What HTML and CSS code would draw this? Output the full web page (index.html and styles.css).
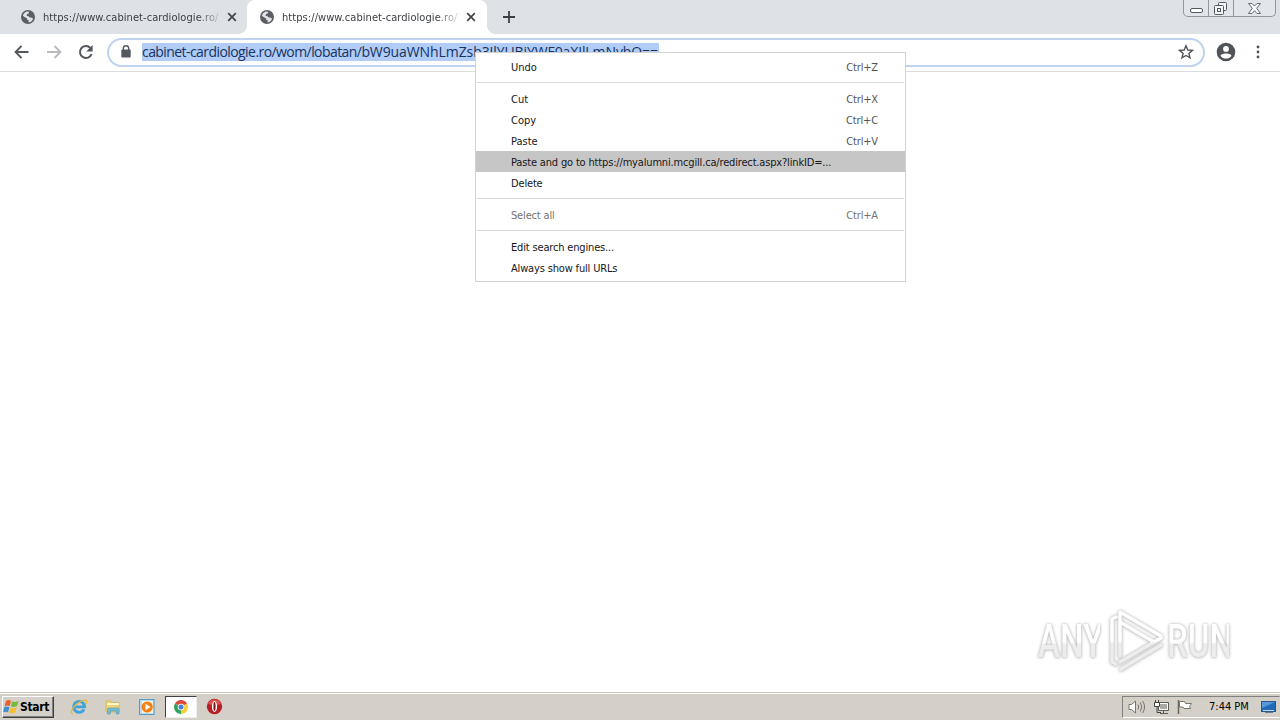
FILE: index.html
```html
<!DOCTYPE html>
<html lang="en">
<head>
<meta charset="utf-8">
<title>Browser</title>
<link rel="stylesheet" href="styles.css">
</head>
<body>
<svg class="defs" width="0" height="0">
  <symbol id="globe" viewBox="0 0 14 14"><circle cx="7" cy="7" r="7" fill="#5b5e62"/><path d="M3 3.2 5.6 1.6 8.2 1.8 7.6 3.4 6 4.2 5.6 5.8 7.6 6.2 8.6 7.6 10 7.4 11.6 8 12 9.2 10 11.8 7.6 12.4 7.8 10.6 6.2 9.8 6 8.2 4.2 7.4 1.8 5.8Z" fill="#dfe2e6"/></symbol>
  <symbol id="close" viewBox="0 0 10 10"><path d="M1.2 1.2 8.8 8.8M8.8 1.2 1.2 8.8" stroke="#404347" stroke-width="1.7" fill="none"/></symbol>
</svg>
<div class="screen">
  <header class="tabs">
    <div class="tab"><svg class="globe"><use href="#globe"/></svg><span class="tab-title">https://www.cabinet-cardiologie.ro/</span><svg class="close"><use href="#close"/></svg></div>
    <div class="tab active"><svg class="globe"><use href="#globe"/></svg><span class="tab-title">https://www.cabinet-cardiologie.ro/</span><svg class="close"><use href="#close"/></svg></div>
    <svg class="plus" width="12" height="12" viewBox="0 0 12 12"><path d="M6 0V12M0 6H12" stroke="#3d4043" stroke-width="1.8"/></svg>
    <div class="window-buttons">
      <span class="wb wb-min"><svg width="13" height="6"><rect x=".5" y=".5" width="12" height="4" rx="1.5" fill="#fff" stroke="#55585f"/></svg></span>
      <span class="wb wb-max"><svg width="14" height="14" fill="#f4f5f7" stroke="#55585f"><rect x="4.5" y=".5" width="8" height="8" rx="1"/><rect x=".5" y="3.5" width="9" height="9" rx="1"/><rect x="3.5" y="6.5" width="3" height="3"/></svg></span>
      <span class="wb wb-close"><svg width="13" height="11"><path d="M.5.5H4L6.5 3 9 .5h3.500L8.700 5.300 12.500 10.500H9L6.500 7.700 4 10.500H.5L4.300 5.300Z" fill="#f8f8fa" stroke="#666970"/></svg></span>
    </div>
  </header>
  <nav class="toolbar">
    <svg class="back" width="16" height="14" viewBox="0 0 16 14"><path d="M14.500 7H1.500M7.500 1 1.500 7l6 6" fill="none" stroke="#55585b" stroke-width="1.800"/></svg>
    <svg class="forward" width="16" height="14" viewBox="0 0 16 14"><path d="M1 7h13.500M8.500 1l6 6-6 6" fill="none" stroke="#b8babd" stroke-width="1.800"/></svg>
    <svg class="reload" width="16" height="16" viewBox="0 0 16 16"><path d="M13.600 10A6 6 0 1 1 12.300 3.800" fill="none" stroke="#53565a" stroke-width="2"/><path d="M14.600 1v6.500H8.300Z" fill="#53565a"/></svg>
    <div class="omnibox">
      <svg class="lock" width="10" height="13" viewBox="0 0 10 13"><path d="M2.300 6V3.500a2.700 2.700 0 0 1 5.400 0V6" fill="none" stroke="#55585c" stroke-width="1.400"/><rect x=".3" y="4.600" width="9.400" height="7.900" rx="1" fill="#55585c"/></svg>
      <span class="url"><span class="url-path">cabinet-cardiologie.ro/wom/lobatan/</span>bW9uaWNhLmZsb3JlYUBjYWF0aXJlLmNvbQ==</span>
      <svg class="star" width="16" height="16" viewBox="0 0 16 16"><path d="M8 1.800 9.800 6l4.600.4-3.500 3 1.100 4.500L8 11.500l-4 2.400 1.100-4.500-3.500-3L6.200 6Z" fill="none" stroke="#505357" stroke-width="1.400"/></svg>
    </div>
    <svg class="profile" width="20" height="20" viewBox="0 0 20 20"><circle cx="10" cy="10" r="9.300" fill="#505357"/><circle cx="10" cy="6.900" r="2.900" fill="#fff"/><path d="M4.400 13.700C5.500 11.800 8 11.500 10 11.500s4.500.3 5.600 2.200C14.300 15.600 12.300 16.600 10 16.600s-4.300-1-5.600-2.900Z" fill="#fff"/></svg>
    <svg class="more" width="4" height="14" fill="#505357"><circle cx="2" cy="2" r="1.400"/><circle cx="2" cy="7" r="1.400"/><circle cx="2" cy="12" r="1.400"/></svg>
  </nav>
  <main class="page"></main>
  <footer class="taskbar">
    <div class="start">
      <svg width="17" height="16" viewBox="0 0 17 16"><path d="M3 2C5 .6 6.500 1 8 1.800L6.700 7C5 6.200 3.500 6.200 1.600 7.200Z" fill="#e8602c"/><path d="M9 2.300c2 1 4 .8 6.500-.4L14 7.100c-2 1-4 1-6 .2Z" fill="#79b93c"/><path d="M1.300 8.300C3 7.300 4.700 7.400 6.400 8.200L5 13.400C3.500 12.500 2 12.500 0 13.500Z" fill="#3f8ed0"/><path d="M7.500 8.500c2 1 4 .8 6.200-.2l-1.400 5.200c-2 1-4.200 1-6.200.2Z" fill="#f6bf2d"/></svg>
      <span class="start-label">Start</span>
    </div>
    <div class="launchers">
      <svg width="18" height="18" viewBox="0 0 18 18"><path d="M14 11.400A5.500 5.500 0 1 1 14.600 8.900H5" fill="none" stroke="#3fa2dd" stroke-width="2.900"/><path d="M2.800 15.300C-.4 15.800 1.500 10.800 6 6.800 10.800 2.400 16.500.5 16.600 3.600c0 1-.4 1.900-1 2.800" fill="none" stroke="#e6b83c" stroke-width="1.300"/></svg>
      <svg width="18" height="18" viewBox="0 0 18 18"><path d="M2 3h5l1 1.500h7V14H2Z" fill="#efd477" stroke="#cfae4f" stroke-width=".7"/><path d="M3 6h12" stroke="#fff6ca" stroke-width="2"/><path d="M3.500 16v-4.500q0-1.500 1.500-1.500h8.500q1.500 0 1.500 1.500V16h-2.700v-3h-6v3Z" fill="#73bddb" stroke="#4e93b3" stroke-width=".6"/></svg>
      <svg width="18" height="18" viewBox="0 0 18 18"><rect x="1.500" y="1.500" width="14.500" height="15" fill="#b5dcf2" stroke="#519cc9"/><rect x="4" y="3" width="11" height="12" fill="#fff3df"/><circle cx="9.200" cy="9" r="5.600" fill="#ef8117"/><path d="M7.500 5.800v6.400L12.500 9Z" fill="#fff"/></svg>
      <span class="running"><svg width="14" height="14" viewBox="0 0 14 14"><path d="M7 7 .94 3.500A7 7 0 0 1 13.060 3.500Z" fill="#dc4938"/><path d="M7 7 13.060 3.500A7 7 0 0 1 7 14Z" fill="#f8cf36"/><path d="M7 7v7A7 7 0 0 1 .94 3.500Z" fill="#35a15b"/><circle cx="7" cy="7" r="3.300" fill="#fff"/><circle cx="7" cy="7" r="2.500" fill="#4580dd"/></svg></span>
      <svg class="opera" width="17" height="17" viewBox="0 0 17 17"><circle cx="8.500" cy="8.500" r="7.700" fill="#b71e23"/><path d="M2 6a7 7 0 0 1 13 0Q8.500 8 2 6" fill="#d75551"/><ellipse cx="8.500" cy="8.500" rx="2.600" ry="5.400" fill="#fff"/><ellipse cx="8.500" cy="8.500" rx="1.100" ry="4.400" fill="#8d1418"/></svg>
    </div>
    <div class="tray">
      <svg width="18" height="16" viewBox="0 0 18 16"><path d="M1 5.500h2.500L7.500 2v12L3.500 10.500H1Z" fill="#fff" stroke="#77756f"/><path d="M10 5.500q1.500 2.500 0 5M12.300 3.500q3 4.500 0 9M14.600 2q4 6 0 12" fill="none" stroke="#77756f"/></svg>
      <svg class="network" width="17" height="16" viewBox="0 0 17 16"><path d="M5.500 3.500h10v8h-10Z" fill="#aaa9a4" stroke="#5e5d58"/><path d="M6.500 4.500h8v6h-8Z" fill="none" stroke="#fff"/><path d="M7 14.500h8M10.500 12v2" stroke="#5e5d58"/><path d="M2 3h4v4H2Z" fill="#fff"/><path d="M1.500 3.500h5v4h-5ZM4 8v5.500h4M2.500 1v2M5.500 1v2" fill="none" stroke="#454440"/></svg>
      <svg class="flag" width="17" height="16" viewBox="0 0 17 16"><path d="M2.500 1v14" stroke="#65645f" stroke-width="1.500"/><path d="M3.500 2.500h5l1 2h6l-2 3 1.200 2H8l-1-1.500H3.500Z" fill="#fff" stroke="#77756f"/></svg>
      <span class="clock">7:44 PM</span>
      <svg class="desktop" width="15" height="14" viewBox="0 0 15 14"><rect x=".5" y="1.500" width="14" height="10" fill="#2468b8" stroke="#28578e"/><path d="M1 2h13L1 8Z" fill="#5599dc"/><path d="M2 10.500h11" stroke="#c1dcf0"/><path d="M4 12.500h8" stroke="#687d91"/></svg>
    </div>
  </footer>
  <div class="menu">
    <div class="item short"><span>Undo</span><kbd>Ctrl+Z</kbd></div>
    <hr>
    <div class="item short"><span>Cut</span><kbd>Ctrl+X</kbd></div>
    <div class="item short"><span>Copy</span><kbd>Ctrl+C</kbd></div>
    <div class="item short"><span>Paste</span><kbd>Ctrl+V</kbd></div>
    <div class="item selected"><span>Paste and go to https://myalumni.mcgill.ca/redirect.aspx?linkID=...</span></div>
    <div class="item"><span>Delete</span></div>
    <hr>
    <div class="item disabled"><span>Select all</span><kbd>Ctrl+A</kbd></div>
    <hr>
    <div class="item"><span>Edit search engines...</span></div>
    <div class="item"><span>Always show full URLs</span></div>
  </div>
  <div class="watermark">
    <span class="wm-text">ANY</span>
    <svg width="58" height="66" viewBox="0 0 58 66">
      <defs><linearGradient id="fade" gradientUnits="userSpaceOnUse" x1="0" y1="0" x2="0" y2="66"><stop offset=".5" stop-color="#fff"/><stop offset=".54" stop-color="#ededed"/></linearGradient></defs>
      <g fill="none" stroke="url(#fade)" stroke-width="3.500" stroke-linejoin="round" stroke-linecap="round"><path d="M9 9 5 11V54L9 56M13 48V4L54 28M13 14 47 34M13 54 54 30M14 61 54 37"/></g>
    </svg>
    <span class="wm-text">RUN</span>
  </div>
</div>
</body>
</html>
```
FILE: styles.css
```css
* { box-sizing: border-box; }
body { margin: 0; font-family: "DejaVu Sans Condensed", "DejaVu Sans", sans-serif; font-stretch: condensed; font-size: 11px; color: #161616; }
svg { display: block; flex: none; }
.defs { position: absolute; }
.screen { position: relative; width: 1280px; height: 720px; overflow: hidden; display: flex; flex-direction: column; background: #fff; }
.tabs { height: 34px; background: #dee1e6; display: flex; flex: none; padding-left: 8px; }
.tab { width: 239px; height: 34px; display: flex; align-items: center; padding-left: 13px; color: #3a3d41; }
.tab.active { position: relative; width: 240px; background: #fff; border-radius: 8px 8px 0 0; }
.tab.active::before, .tab.active::after { content: ""; position: absolute; bottom: 0; width: 8px; height: 8px; }
.tab.active::before { left: -8px; background: radial-gradient(circle at 0 0, #dee1e6 7.5px, #fff 8px); }
.tab.active::after { right: -8px; background: radial-gradient(circle at 100% 0, #dee1e6 7.5px, #fff 8px); }
.globe { width: 14px; height: 14px; }
.tab-title { width: 176px; margin-left: 8px; white-space: nowrap; overflow: hidden; letter-spacing: .07px; -webkit-mask-image: linear-gradient(90deg, #000 155px, transparent 180px); mask-image: linear-gradient(90deg, #000 155px, transparent 180px); }
.close { width: 10px; height: 10px; margin-left: 8px; }
.plus { margin: 11px 0 0 16px; }
.window-buttons { display: flex; margin-left: auto; margin-right: 4px; width: 93px; height: 17px; border: 1px solid #92969f; border-top: 0; border-radius: 0 0 5px 5px; background: #e2e5e9; }
.wb { display: flex; justify-content: center; padding-top: 2px; }
.wb-min { width: 25px; padding-top: 8px; border-right: 1px solid #92969f; }
.wb-max { width: 25px; border-right: 1px solid #92969f; }
.wb-close { flex: 1; padding-top: 3px; }
.toolbar { height: 38px; flex: none; display: flex; align-items: center; padding-left: 14px; border-bottom: 1px solid #dadcdf; }
.toolbar > svg, .omnibox svg { margin-bottom: 1px; }
.forward { margin-left: 16px; }
.reload { margin-left: 16px; }
.omnibox { width: 1098px; height: 29px; margin: 0 0 1px 13px; border: 2px solid #bfd2ee; border-radius: 15px; display: flex; align-items: center; padding: 0 9px 0 12px; }
.url { margin-left: 11px; height: 18px; line-height: 17px; background: #b0ccf7; color: #17335e; font-family: "Open Sans", "Noto Sans", sans-serif; font-size: 14px; font-stretch: normal; white-space: nowrap; width: 517px; letter-spacing: -.09px; }
.url-path { letter-spacing: -.57px; }
.star { margin-left: auto; }
.profile { margin-left: 11px; }
.more { margin-left: 20px; }
.page { flex: 1; }
.taskbar { height: 28px; flex: none; display: flex; align-items: center; background: #d4d0c8; border-top: 1px solid #c9c6be; box-shadow: inset 0 1px #fff; padding: 0 0 0 2px; }
.start { width: 52px; height: 22px; display: flex; align-items: center; border: 1px solid; border-color: #fff #404040 #404040 #fff; box-shadow: inset -1px -1px #808080; }
.start-label { font-weight: bold; font-size: 12px; letter-spacing: -.3px; color: #000; }
.launchers { display: flex; align-items: center; margin-left: 16px; gap: 16px; }
.running { width: 32px; height: 22px; margin-left: -7px; display: flex; align-items: center; justify-content: center; background: #fff; border: 1px solid; border-color: #404040 #eee #eee #404040; }
.opera { margin-left: -7px; }
.tray { margin-left: auto; width: 158px; height: 22px; display: flex; align-items: center; padding-left: 5px; border: 1px solid; border-color: #808080 #d4d0c8 #fff #808080; }
.tray svg.network { margin-left: 7px; }
.tray svg.flag { margin-left: 6px; }
.clock { margin-left: 16px; color: #000; white-space: nowrap; width: 40px; }
.tray .desktop { margin-left: 12px; }
.menu { position: absolute; left: 475px; top: 52px; width: 431px; height: 230px; padding: 3px 0; background: #fff; border: 1px solid #d2d2d2; }
.item { height: 21px; display: flex; align-items: center; justify-content: space-between; padding: 2px 27px 0 35px; white-space: nowrap; letter-spacing: -.165px; }
.item.short { letter-spacing: 0; }
.item kbd { font: inherit; color: #555; letter-spacing: -.15px; }
.item.selected { background: #c6c6c6; }
.item.disabled, .item.disabled kbd { color: #747474; }
.menu hr { height: 1px; margin: 5px 1px; border: 0; background: #d8d8d8; }
.watermark { position: absolute; left: 1038px; top: 608px; width: 200px; height: 66px; display: flex; align-items: center; filter: drop-shadow(0 0 1.5px #b5b5b5) drop-shadow(0 1px 1px #e0e0e0); }
.wm-text { font: 500 46px Roboto, sans-serif; color: transparent; background: linear-gradient(#fff 52%, #ededed 56%); -webkit-background-clip: text; background-clip: text; width: 86px; margin-right: -22px; flex: none; transform: scaleX(.72); transform-origin: left center; }
.watermark svg { margin: 0 2px 0 5px; }
```
